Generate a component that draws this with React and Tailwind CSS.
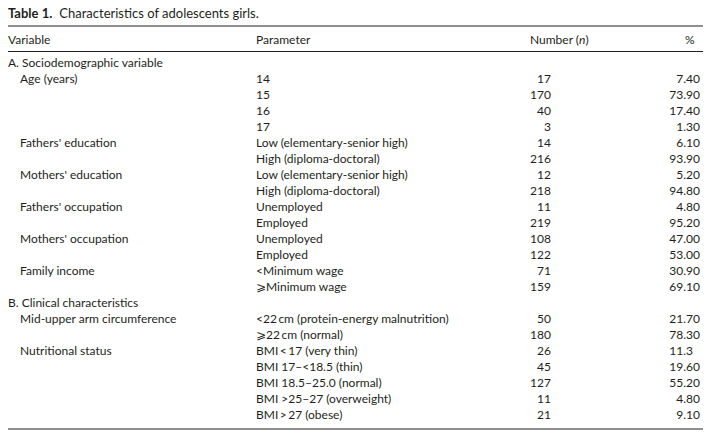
import React from 'react';

// rows of the table: [variable, parameter, n, %, indent, section]
const rows = [
  { v: 'A. Sociodemographic variable', section: true },
  { v: 'Age (years)', p: '14', n: '17', pct: '7.40' },
  { p: '15', n: '170', pct: '73.90' },
  { p: '16', n: '40', pct: '17.40' },
  { p: '17', n: '3', pct: '1.30' },
  { v: "Fathers' education", p: 'Low (elementary-senior high)', n: '14', pct: '6.10' },
  { p: 'High (diploma-doctoral)', n: '216', pct: '93.90' },
  { v: "Mothers' education", p: 'Low (elementary-senior high)', n: '12', pct: '5.20' },
  { p: 'High (diploma-doctoral)', n: '218', pct: '94.80' },
  { v: "Fathers' occupation", p: 'Unemployed', n: '11', pct: '4.80' },
  { p: 'Employed', n: '219', pct: '95.20' },
  { v: "Mothers' occupation", p: 'Unemployed', n: '108', pct: '47.00' },
  { p: 'Employed', n: '122', pct: '53.00' },
  { v: 'Family income', p: '<Minimum wage', n: '71', pct: '30.90' },
  { p: '⩾Minimum wage', n: '159', pct: '69.10' },
  { v: 'B. Clinical characteristics', section: true },
  { v: 'Mid-upper arm circumference', p: '<22\u2009cm (protein-energy malnutrition)', n: '50', pct: '21.70' },
  { p: '⩾22\u2009cm (normal)', n: '180', pct: '78.30' },
  { v: 'Nutritional status', p: 'BMI\u2009<\u200917 (very thin)', n: '26', pct: '11.3', short: true },
  { p: 'BMI 17–<18.5 (thin)', n: '45', pct: '19.60' },
  { p: 'BMI 18.5–25.0 (normal)', n: '127', pct: '55.20' },
  { p: 'BMI >25–27 (overweight)', n: '11', pct: '4.80' },
  { p: 'BMI\u2009>\u200927 (obese)', n: '21', pct: '9.10' },
];

export default function App() {
  return (
    <div className="w-[711px] h-[436px] bg-white text-[#231f20] font-['Lato','DejaVu_Sans',sans-serif] text-[12px] leading-[16px]">
      <div className="px-[8px] pt-[5px]">
        <div className="h-[16px] text-[13px] whitespace-nowrap">
          <span className="font-bold">Table 1.</span>
          <span className="ml-[7px]">Characteristics of adolescents girls.</span>
        </div>

        <div className="mt-[4px] h-[2px] bg-[#8f8f8f]" />

        {/* header */}
        <div className="flex h-[16px] mt-[5px]">
          <div className="w-[248px]">Variable</div>
          <div className="w-[274px]">Parameter</div>
          <div className="w-[155px]">
            Number (<span className="italic">n</span>)
          </div>
          <div className="flex-1">%</div>
        </div>
        <div className="mt-[3px] h-px bg-[#231f20]" />

        <div className="pt-[3px]">
          {rows.map((r, i) => (
            <div key={i} className="flex h-[16px]">
              <div className={r.section ? 'w-[248px] whitespace-nowrap' : 'w-[248px] pl-[12px] whitespace-nowrap'}>
                {r.v}
              </div>
              {!r.section && (
                <>
                  <div className="w-[232px] whitespace-nowrap">{r.p}</div>
                  <div className="w-[63px] text-right">{r.n}</div>
                  <div className={r.short ? 'flex-1 text-right pr-[10px]' : 'flex-1 text-right pr-[3px]'}>
                    {r.pct}
                  </div>
                </>
              )}
            </div>
          ))}
        </div>

        <div className="mt-[5px] h-[2px] bg-[#8f8f8f]" />
      </div>
    </div>
  );
}
